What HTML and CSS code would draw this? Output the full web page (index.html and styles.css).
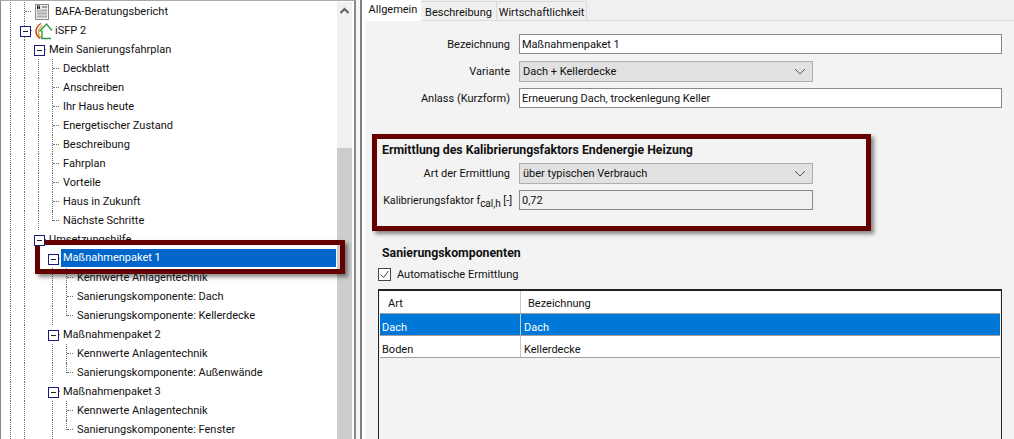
FILE: index.html
```html
<!DOCTYPE html>
<html lang="de">
<head>
<meta charset="utf-8">
<title>Sanierungsfahrplan</title>
<link rel="stylesheet" href="styles.css">
</head>
<body>
<div class="app">
  <aside class="tree-panel">
    <div class="tree">
      <div class="row"><i class="g l"></i><i class="g l tee"></i><svg class="doc" width="14" height="16" viewBox="0 0 14 16"><rect x="0.5" y="0.5" width="13" height="15" fill="#eee" stroke="#8a8a8a"/><rect x="7" y="2" width="5" height="2" fill="#999"/><rect x="2" y="5.500" width="10" height="2" fill="#aaa"/><rect x="2" y="8.500" width="10" height="2" fill="#aaa"/><rect x="2" y="11.500" width="10" height="2" fill="#aaa"/><rect x="1" y="1" width="5" height="4.500" fill="#fff"/><path d="M2 1.500h2.500l.7.6v.8l-.5.4.5.4v.7l-.7.6H2zM3 2.300v.7h1.200v-.7zM3 3.700v.8h1.200v-.8z" fill="#111" fill-rule="evenodd"/></svg><span class="t t-icon">BAFA-Beratungsbericht</span></div>
      <div class="row"><i class="g l"></i><i class="g l"><i class="x"></i></i><svg class="doc house" width="16" height="18" viewBox="0 0 16 18" fill="none"><path d="M5 16.500C-.5 12 -.5 6 6 1.500" stroke="#c8402f" stroke-width="1.500"/><path d="M7 16.500C2 12 2 8 7.500 3.500" stroke="#e5b62f" stroke-width="1.500"/><path d="M4.500 9.500L11.500 2l5.500 6.500M7 8.500V16.500H16" stroke="#2a9d4a" stroke-width="1.400"/></svg><span class="t t-house">iSFP 2</span></div>
      <div class="row"><i class="g l"></i><i class="g l"></i><i class="x"></i><span class="t">Mein Sanierungsfahrplan</span></div>
      <div class="row"><i class="g l"></i><i class="g l"></i><i class="g l"></i><i class="g l tee"></i><span class="t">Deckblatt</span></div>
      <div class="row"><i class="g l"></i><i class="g l"></i><i class="g l"></i><i class="g l tee"></i><span class="t">Anschreiben</span></div>
      <div class="row"><i class="g l"></i><i class="g l"></i><i class="g l"></i><i class="g l tee"></i><span class="t">Ihr Haus heute</span></div>
      <div class="row"><i class="g l"></i><i class="g l"></i><i class="g l"></i><i class="g l tee"></i><span class="t">Energetischer Zustand</span></div>
      <div class="row"><i class="g l"></i><i class="g l"></i><i class="g l"></i><i class="g l tee"></i><span class="t">Beschreibung</span></div>
      <div class="row"><i class="g l"></i><i class="g l"></i><i class="g l"></i><i class="g l tee"></i><span class="t">Fahrplan</span></div>
      <div class="row"><i class="g l"></i><i class="g l"></i><i class="g l"></i><i class="g l tee"></i><span class="t">Vorteile</span></div>
      <div class="row"><i class="g l"></i><i class="g l"></i><i class="g l"></i><i class="g l tee"></i><span class="t">Haus in Zukunft</span></div>
      <div class="row"><i class="g l"></i><i class="g l"></i><i class="g l"></i><i class="g l end"></i><span class="t">Nächste Schritte</span></div>
      <div class="row"><i class="g l"></i><i class="g l"></i><i class="x"></i><span class="t">Umsetzungshilfe</span></div>
      <div class="row"><i class="g l"></i><i class="g l"></i><i class="g"></i><i class="x"></i><span class="t sel">Maßnahmenpaket 1</span></div>
      <div class="row"><i class="g l"></i><i class="g l"></i><i class="g"></i><i class="g l"></i><i class="g l tee"></i><span class="t">Kennwerte Anlagentechnik</span></div>
      <div class="row"><i class="g l"></i><i class="g l"></i><i class="g"></i><i class="g l"></i><i class="g l tee"></i><span class="t">Sanierungskomponente: Dach</span></div>
      <div class="row"><i class="g l"></i><i class="g l"></i><i class="g"></i><i class="g l"></i><i class="g l end"></i><span class="t">Sanierungskomponente: Kellerdecke</span></div>
      <div class="row"><i class="g l"></i><i class="g l"></i><i class="g"></i><i class="x"></i><span class="t">Maßnahmenpaket 2</span></div>
      <div class="row"><i class="g l"></i><i class="g l"></i><i class="g"></i><i class="g l"></i><i class="g l tee"></i><span class="t">Kennwerte Anlagentechnik</span></div>
      <div class="row"><i class="g l"></i><i class="g l"></i><i class="g"></i><i class="g l"></i><i class="g l end"></i><span class="t">Sanierungskomponente: Außenwände</span></div>
      <div class="row"><i class="g l"></i><i class="g l"></i><i class="g"></i><i class="x"></i><span class="t">Maßnahmenpaket 3</span></div>
      <div class="row"><i class="g l"></i><i class="g l"></i><i class="g"></i><i class="g l"></i><i class="g l tee"></i><span class="t">Kennwerte Anlagentechnik</span></div>
      <div class="row"><i class="g l"></i><i class="g l"></i><i class="g"></i><i class="g l"></i><i class="g l end"></i><span class="t">Sanierungskomponente: Fenster</span></div>
    </div>
    <div class="scrollbar">
      <svg class="arrow" width="15" height="17" viewBox="0 0 15 17" fill="none"><path d="M3.500 11L7.500 7l4 4" stroke="#606060" stroke-width="2"/></svg>
      <div class="thumb"></div>
    </div>
  </aside>
  <main class="pane">
    <div class="content">
      <nav class="tabs">
        <span class="tab on">Allgemein</span><span class="tab tab-b">Beschreibung</span><span class="tab tab-w">Wirtschaftlichkeit</span>
      </nav>
      <div class="page">
        <div class="form top">
          <label class="f"><span class="lab">Bezeichnung</span><span class="in wide">Maßnahmenpaket 1</span></label>
          <label class="f"><span class="lab lab-s">Variante</span><span class="in sel-box">Dach + Kellerdecke<svg width="12" height="7" viewBox="0 0 12 7" fill="none"><path d="M1 1l5 5 5-5" stroke="#555"/></svg></span></label>
          <label class="f"><span class="lab">Anlass (Kurzform)</span><span class="in wide">Erneuerung Dach, trockenlegung Keller</span></label>
        </div>
        <h2 class="h cal">Ermittlung des Kalibrierungsfaktors Endenergie Heizung</h2>
        <div class="form">
          <label class="f"><span class="lab lab-s">Art der Ermittlung</span><span class="in sel-box">über typischen Verbrauch<svg width="12" height="7" viewBox="0 0 12 7" fill="none"><path d="M1 1l5 5 5-5" stroke="#555"/></svg></span></label>
          <label class="f"><span class="lab lab-k">Kalibrierungsfaktor f<sub>cal,h</sub> [-]</span><span class="in ro">0,72</span></label>
        </div>
        <h2 class="h san">Sanierungskomponenten</h2>
        <label class="check"><svg width="13" height="13" viewBox="0 0 13 13" fill="none"><rect x=".5" y=".5" width="12" height="12" stroke="#444" fill="#fff"/><path d="M2.500 6.500l3 3 5-6.500" stroke="#444"/></svg>Automatische Ermittlung</label>
        <div class="grid">
          <div class="tr head"><span class="c1">Art</span><span class="c2">Bezeichnung</span></div>
          <div class="tr active"><span class="c1">Dach</span><span class="c2">Dach</span></div>
          <div class="tr"><span class="c1">Boden</span><span class="c2">Kellerdecke</span></div>
        </div>
      </div>
    </div>
  </main>
</div>
<div class="mark mark-tree"></div>
<div class="mark mark-cal"></div>
</body>
</html>
```
FILE: styles.css
```css
* { box-sizing: border-box; }
html, body { margin: 0; height: 439px; overflow: hidden; background: #fff; }
body { font: 11px/19px Roboto, "Open Sans", sans-serif; color: #111; position: relative; }
.app { display: flex; height: 439px; }

.tree-panel { width: 356px; flex: none; display: flex; background: #fff; border-top: 1px solid #aaa; border-left: 1px solid #8a8a8a; border-right: 2px solid #8a8a8a; }
.tree { width: 336px; flex: none; overflow: hidden; padding-top: 1px; }
.row { display: flex; height: 19px; padding-left: 2px; align-items: stretch; }
.g { width: 14px; flex: none; height: 19px; position: relative; }
.g.l::before { content: ""; position: absolute; left: 7px; top: 0; bottom: 0; border-left: 1px dotted #707070; }
.g.end::before { bottom: 9px; }
.g.tee::after, .g.end::after { content: ""; position: absolute; left: 8px; top: 9px; width: 6px; border-top: 1px dotted #707070; }
.x { display: block; width: 14px; flex: none; height: 19px; position: relative; }
.x::before { content: ""; position: absolute; z-index: 1; left: 3px; top: 5px; width: 9px; height: 9px; border: 1px solid #1a1a80; background: linear-gradient(#222, #222) center / 5px 1px no-repeat #fff; }
.x::after { content: ""; position: absolute; left: 12px; top: 9px; width: 2px; border-top: 1px dotted #707070; }
.doc { flex: none; margin-left: 4px; align-self: center; overflow: visible; }
.t { margin-left: 2px; padding: 0 2px; white-space: nowrap; }
.t-icon { margin-left: 6px; padding: 0; }
.t-house { margin-left: 4px; padding: 0; }
.sel { flex: 1; background: #0066cc; color: #fff; margin-right: 1px; height: 18px; line-height: 18px; align-self: flex-start; }

.scrollbar { width: 15px; flex: none; background: #f0f0f0; margin-top: 1px; }
.arrow { display: block; }
.thumb { height: 300px; margin-top: 129px; background: #cdcdcd; }

.pane { flex: 1; min-width: 0; padding-left: 4px; background: #f6f6f6; }
.content { height: 100%; border-left: 2px solid #808080; padding-left: 3px; background: #fff; display: flex; flex-direction: column; }
.tabs { display: flex; height: 21px; flex: none; align-items: flex-end; background: #f0f0f0; border-bottom: 1px solid #dcdcdc; }
.tab { height: 19px; width: 76px; text-align: center; background: #f0f0f0; border-right: 1px solid #d9d9d9; border-top: 1px solid #d9d9d9; line-height: 21px; font-size: 11px; }
.tab.on { height: 21px; width: 56px; background: #fff; border: 0; margin-bottom: -1px; line-height: 20px; }
.tab-w { width: 90px; }

.page { flex: 1; background: #f3f3f3; font-size: 11px; min-height: 0; }
.form.top { padding-top: 13px; }
.f { display: flex; align-items: center; margin-bottom: 6px; }
.top .f:first-child { margin-bottom: 7px; }
.lab { width: 154px; text-align: right; padding-right: 9px; flex: none; white-space: nowrap; padding-top: 1px; }
.lab-s { padding-top: 0; }
.lab sub { font-size: 10px; line-height: 0; }
.lab-k { padding-right: 7px; font-size: 10.700px; }
.in { height: 20px; line-height: 19px; border: 1px solid #8a8a8a; background: #fff; padding: 0 2px; display: block; }
.in.wide { width: 483px; }
.sel-box { height: 21px; width: 294px; background: #e1e1e1; border-color: #adadad; padding: 0 3px; display: flex; align-items: center; justify-content: space-between; }
.sel-box svg { margin-right: 3px; }
.ro { width: 294px; background: #f0f0f0; border-color: #8a8a8a; }

.h { margin: 0; font-size: 12.300px; line-height: 16px; font-weight: 700; color: #111; }
.cal { margin: 34px 0 5px 17px; }
.san { margin: 35px 0 0 17px; }
.check { display: flex; align-items: center; gap: 6px; margin: 4px 0 6px 13px; height: 18px; }
.grid { margin-left: 13px; width: 624px; height: 150px; border: 1px solid #222; border-top-width: 2px; border-bottom: 0; background: #f3f3f3; padding: 0 1px; }
.tr { display: flex; height: 22px; background: #fff; border-bottom: 1px solid #a0a0a0; }
.tr span { height: 100%; line-height: 28px; }
.c1 { width: 141px; padding-left: 2px; border-right: 1px solid #c8c8c8; flex: none; }
.c2 { flex: 1; padding-left: 3px; }
.tr.head { height: 23px; }
.tr.head span { line-height: 25px; }
.head .c1 { padding-left: 8px; }
.head .c2 { padding-left: 7px; }
.tr.active { background: #0078d7; color: #fff; }

.mark { position: absolute; border: 5px solid #640000; box-shadow: 3px 3px 4px rgba(0,0,0,.45); pointer-events: none; }
.mark-tree { left: 35px; top: 240px; width: 310px; height: 34px; }
.mark-cal { left: 372px; top: 134px; width: 499px; height: 97px; }
```
